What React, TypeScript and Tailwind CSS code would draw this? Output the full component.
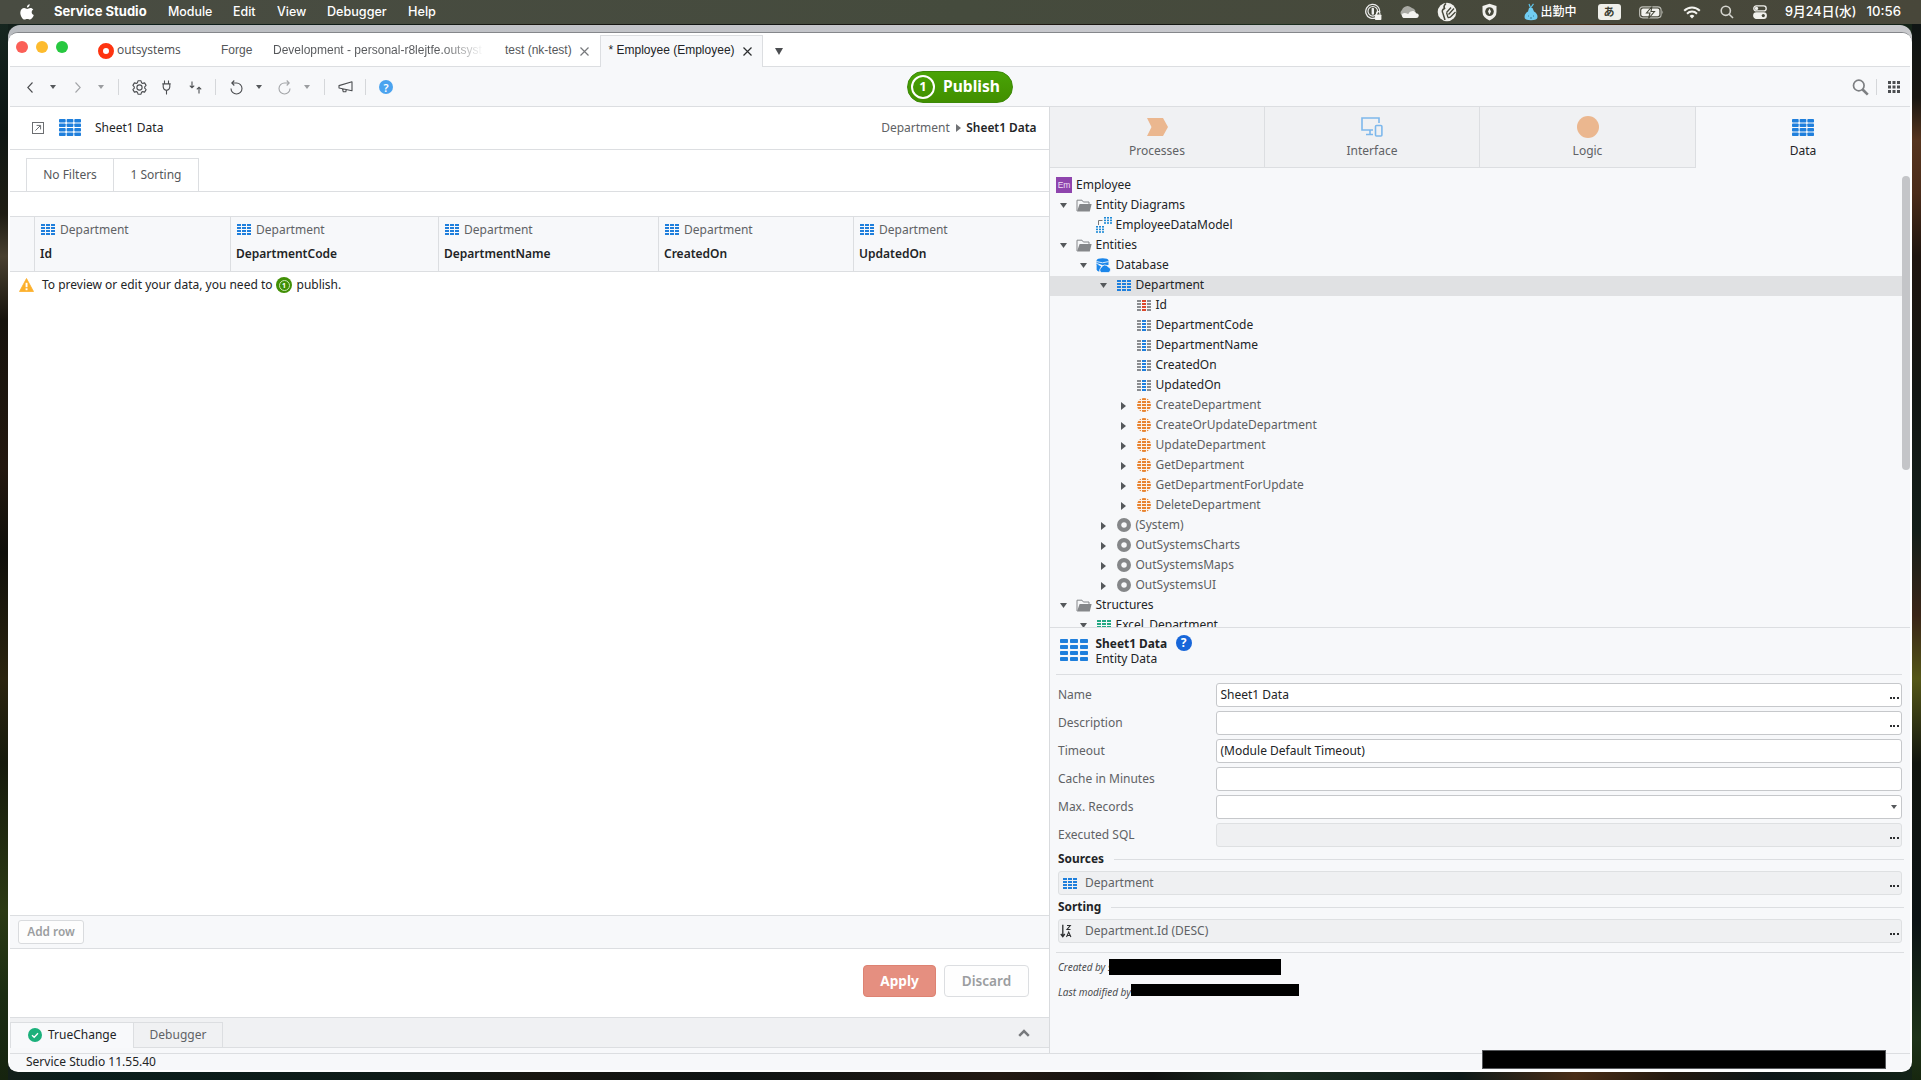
import React from "react";

type P = { className?: string };

/* ---------- icons ---------- */

function TableIcon({ w = 14, h = 11, color = "#1f7fdc", mid, gap = 1 }: { w?: number; h?: number; color?: string; mid?: string; gap?: number }) {
  const cw = (w - 2 * gap) / 3;
  const ch = (h - 3 * gap) / 4;
  return (
    <svg width={w} height={h} viewBox={`0 0 ${w} ${h}`} className="block shrink-0">
      {[0, 1, 2, 3].map((r) =>
        [0, 1, 2].map((c) => (
          <rect key={`${r}${c}`} x={c * (cw + gap)} y={r * (ch + gap)} width={cw} height={ch} fill={c === 1 && mid ? mid : color} rx={w > 20 ? 0.8 : 0} />
        ))
      )}
    </svg>
  );
}

function Tri({ dir = "down", w = 7, h = 5, color = "#55585b" }: { dir?: "down" | "right"; w?: number; h?: number; color?: string }) {
  return (
    <svg width={w} height={h} viewBox={`0 0 ${w} ${h}`} className="block shrink-0">
      <path d={dir === "down" ? `M0 0H${w}L${w / 2} ${h}Z` : `M0 0V${h}L${w} ${h / 2}Z`} fill={color} />
    </svg>
  );
}

function FolderIcon() {
  return (
    <svg width="16" height="13" viewBox="0 0 16 13" className="block">
      <path d="M1 12V1.2H6L7.4 3H13V5" fill="none" stroke="#85878a" strokeWidth="1" />
      <path d="M3.6 5H15.6L13.8 12.5H1Z" fill="#85878a" />
    </svg>
  );
}

function DiagramIcon() {
  return (
    <svg width="16" height="16" viewBox="0 0 16 16" className="block">
      <path d="M2.5 8V3.5H6.5" fill="none" stroke="#777" />
      {[0, 1, 2].map((c) =>
        [0, 1, 2].map((r) => (
          <g key={`${c}${r}`} fill="#1f8ad6">
            <rect x={8 + c * 3} y={r * 2.6} width="2" height="1.6" />
            <rect x={c * 3} y={9 + r * 2.6} width="2" height="1.6" />
          </g>
        ))
      )}
    </svg>
  );
}

function DatabaseIcon() {
  return (
    <svg width="15" height="15" viewBox="0 0 15 15" className="block">
      <path d="M.6 2.4C.6 1 3.2 .3 6.6 .3S12.5 1 12.5 2.4V7H.6Z" fill="#1b86ea" />
      <path d="M.6 3.6Q6.500 6 12.500 3.600" stroke="#f7f8fa" strokeWidth=".9" fill="none" />
      <path d="M.6 5.500L6.500 7.600" stroke="#f7f8fa" strokeWidth="1" fill="none" />
      <path d="M.6 6.300L5 8.200 3.200 13.800Q.6 13 .6 11.500Z" fill="#1b86ea" />
      <path d="M5.600 14.600A2.700 2.700 0 0 1 5.300 9.600 3.800 3.800 0 0 1 12.200 8.900 2.900 2.900 0 0 1 12.200 14.600Z" fill="#1b86ea" stroke="#f7f8fa" strokeWidth=".8" />
    </svg>
  );
}

function ActionIcon() {
  return (
    <svg width="14" height="14" viewBox="0 0 14 14" className="block">
      <circle cx="7" cy="7" r="7" fill="#e8832f" />
      <path d="M0 2.500H14M0 5.500H14M0 8.500H14M0 11.500H14M4.500 0V14M9.500 0V14" stroke="#fbf3ec" strokeWidth="1" />
    </svg>
  );
}

function RingIcon() {
  return (
    <svg width="14" height="14" viewBox="0 0 14 14" className="block">
      <circle cx="7" cy="7" r="4.900" fill="none" stroke="#858789" strokeWidth="4.200" />
    </svg>
  );
}

/* ---------- menu bar ---------- */

function MenuBar() {
  return (
    <div className="flex h-6 shrink-0 items-center bg-linear-to-r from-[#494c42] via-[#454b3d] to-[#48473a] font-['Inter','Noto_Sans_CJK_JP',sans-serif] text-[12.4px] font-medium whitespace-nowrap text-white">
      <svg width="14" height="16" viewBox="0 0 14 16" className="ml-[20px] block" fill="#fff">
        <path d="M9.8 .2C9.9 1.7 8.5 3.5 6.9 3.4 6.7 1.9 8.3 .4 9.8 .2ZM13.3 5.5C11 6.9 11.3 10 13.8 11.1 13 13.3 11.6 15.6 10.1 15.6 9 15.6 8.6 15 7.3 15S5.5 15.6 4.5 15.6C2.5 15.6 .3 11.8 .3 8.8 .3 5.7 2.3 4.1 4.2 4.1 5.5 4.1 6.5 4.9 7.2 4.9S9 4 10.5 4C11.5 4 12.7 4.6 13.3 5.5Z" />
      </svg>
      <span className="ml-[20px] w-[114px] text-[13px] font-bold">Service Studio</span>
      <span className="w-[65px]">Module</span>
      <span className="w-[44px]">Edit</span>
      <span className="w-[50px]">View</span>
      <span className="w-[81px] text-[12.600px]">Debugger</span>
      <span className="text-[12.700px]">Help</span>

      <div className="ml-auto flex w-[556.500px] items-center">
        <svg width="17" height="18" viewBox="0 0 17 18" className="block">
          <path d="M11 14.600A7 7 0 1 1 14.700 9" fill="none" stroke="#eee" strokeWidth="1.300" />
          <circle cx="7.800" cy="8.300" r="4.800" fill="none" stroke="#eee" strokeWidth="1.200" />
          <rect x="6.600" y="4.800" width="2.400" height="7" rx="1" fill="#eee" />
          <rect x="10" y="11.500" width="6.400" height="5.500" rx=".8" fill="#f4f4f0" />
          <path d="M11.500 11.500V10.300A1.700 1.700 0 0 1 14.900 10.300V11.500" fill="none" stroke="#f4f4f0" strokeWidth="1.100" />
        </svg>
        <svg width="20" height="14" viewBox="0 0 20 14" className="ml-[17px] block">
          <path d="M3.500 11A3.500 3.500 0 0 1 3 5 6 6 0 0 1 13 3 5 5 0 0 1 16.500 6Z" fill="#a9aaa4" />
          <path d="M4.500 13A3 3 0 0 1 3.500 8.500Q6 7.500 9 9 11 5.500 14.500 6 17 6.500 17 8.300 19.800 8.500 19.800 10.800 19.500 13 17.300 13Z" fill="#f3f3f0" />
        </svg>
        <svg width="20" height="20" viewBox="0 0 20 20" className="ml-[18px] block">
          <circle cx="10" cy="10" r="9.300" fill="#f1f1ed" />
          <path d="M9 1.500Q6 4 7.500 6.500 4 8 6 11.500L8 18" stroke="#46483b" strokeWidth="1.500" fill="none" />
          <path d="M9.500 10.500L14 5.500M11.500 12.500L17 6.500M11 15.500Q13 16 15 13.500L18.500 10M9.500 10.500L11 15.500" stroke="#46483b" strokeWidth="1.300" fill="none" />
        </svg>
        <svg width="15" height="18" viewBox="0 0 15 18" className="ml-[25px] block">
          <path d="M7.500 .8L14.500 3V9Q14.500 14.500 7.500 17.400 .5 14.500 .5 9V3Z" fill="#f1f1ed" />
          <circle cx="7.500" cy="8.600" r="4.300" fill="#46483b" />
          <path d="M7.500 5.600L9 8.600 7.500 11.600 6 8.600Z" fill="#f1f1ed" />
        </svg>
        <svg width="14" height="18" viewBox="0 0 14 18" className="ml-[27px] block">
          <path d="M5 1L6.500 5 9.500 .8" stroke="#5ec3ea" strokeWidth="1.200" fill="none" />
          <path d="M5 5H8.500L10 8.500Q13.600 10.500 13.500 14 13.500 17.300 7 17.300 .5 17.300 .5 14 .5 10.500 4 8.500Z" fill="#71cdf2" />
          <path d="M4.500 12.500V13.500M9.500 12.500V13.500M6 15H8" stroke="#3a7e9b" strokeWidth="1" />
        </svg>
        <span className="ml-[3px] text-[12px]">出勤中</span>
        <span className="ml-[21px] flex h-4 w-[23px] items-center justify-center rounded-[3px] bg-[#efefea] text-[11px] font-bold text-[#3d3f33]">あ</span>
        <svg width="25" height="13" viewBox="0 0 25 13" className="ml-[18px] block">
          <rect x=".6" y=".9" width="21.500" height="11" rx="3.300" fill="none" stroke="#bdbdb6" strokeWidth="1.100" />
          <rect x="2.300" y="2.600" width="18" height="7.600" rx="1.800" fill="#f2f2ee" />
          <path d="M13 .5L7.500 7H11L9.500 12.500 15.500 5.500H12Z" fill="#f2f2ee" stroke="#46483b" strokeWidth="1.100" />
          <path d="M23.400 4.600Q24.800 6.400 23.400 8.200" fill="#bdbdb6" />
        </svg>
        <svg width="18" height="13" viewBox="0 0 18 13" className="ml-[19px] block" fill="none" stroke="#f4f4f0" strokeWidth="2">
          <path d="M1.200 4.700A11 11 0 0 1 16.800 4.700M4 7.700A7 7 0 0 1 14 7.700" />
          <path d="M9 12.500L6.600 9.900A3.500 3.500 0 0 1 11.400 9.900Z" fill="#f4f4f0" stroke="none" />
        </svg>
        <svg width="14" height="14" viewBox="0 0 14 14" className="ml-[19px] block" fill="none" stroke="#d4d4ce" strokeWidth="1.600">
          <circle cx="5.800" cy="5.800" r="4.600" />
          <path d="M9.200 9.200L13 13" />
        </svg>
        <svg width="14" height="14" viewBox="0 0 14 14" className="ml-[19px] block" fill="none" stroke="#f1f1ed" strokeWidth="1.300">
          <rect x=".8" y=".9" width="12.400" height="5" rx="2.500" />
          <rect x=".8" y="8" width="12.400" height="5.300" rx="2.600" fill="#f1f1ed" />
          <circle cx="3.500" cy="3.400" r="1.700" fill="#f1f1ed" stroke="none" />
          <circle cx="10.300" cy="10.600" r="1.600" fill="#46483b" stroke="none" />
        </svg>
        <span className="ml-[18.500px] w-[81.500px] text-[12.700px]">9月24日(水)</span>
        <span className="text-[13.200px]">10:56</span>
      </div>
    </div>
  );
}

/* ---------- window tabs and toolbar ---------- */

function Cross({ color }: { color: string }) {
  return (
    <svg width="9" height="9" viewBox="0 0 9 9" className="block shrink-0" stroke={color} strokeWidth="1.200">
      <path d="M.5 .5L8.500 8.500M8.500 .5L.5 8.500" />
    </svg>
  );
}

function TabBar() {
  return (
    <div className="flex h-[34px] shrink-0 border-b border-[#dcdee1] bg-white font-['Liberation_Sans',sans-serif] text-[12px] whitespace-nowrap text-[#55575a]">
      <div className="mt-2 ml-[6px] flex h-3 gap-[8px]">
        <i className="size-3 rounded-full bg-[#fb5f57]" />
        <i className="size-3 rounded-full bg-[#fdbb2e]" />
        <i className="size-3 rounded-full bg-[#27c840]" />
      </div>
      <div className="ml-[30px] flex h-[34px] items-center">
        <svg width="16" height="16" viewBox="0 0 16 16" className="mt-[2px] block">
          <circle cx="8" cy="8" r="5.500" fill="none" stroke="#fe3410" strokeWidth="5" />
        </svg>
        <span className="ml-[3px] w-[104px] font-['Open_Sans',sans-serif] text-[12px] font-medium tracking-[-0.050px] text-[#4c4d50]">outsystems</span>
        <span className="w-[52px]">Forge</span>
        <span className="w-[232px]">
          <span className="block w-[211px] overflow-hidden bg-linear-to-r from-[#55575a] from-80% to-transparent bg-clip-text text-transparent">Development - personal-r8lejtfe.outsyst</span>
        </span>
        <span className="w-[75px]">test (nk-test)</span>
        <div className="mt-[2px]"><Cross color="#77797c" /></div>
      </div>
      <div className="mt-[2px] ml-[11px] flex h-[32px] w-[163px] shrink-0 items-center border border-b-0 border-[#dcdee1] bg-[#f7f8fa] pb-[3px] pl-[7.500px] text-[#222426]">
        <span className="w-[134px]">* Employee (Employee)</span>
        <div className="mt-[3px]"><Cross color="#2c2e30" /></div>
      </div>
      <div className="mt-[15px] ml-[12px]"><Tri w={8} h={7} color="#4c4e51" /></div>
    </div>
  );
}

function Sep({ className = "" }: P) {
  return <i className={`block h-4 w-px shrink-0 bg-[#d5d7da] ${className}`} />;
}

function Toolbar() {
  const st = { fill: "none", stroke: "#4c4e51", strokeWidth: 1.1 };
  return (
    <div className="flex h-10 shrink-0 items-center border-b border-[#dcdee1] bg-[#f7f8fa]">
      <div className="flex w-[897px] items-center pt-px">
        <svg width="6" height="11" viewBox="0 0 6 11" className="ml-[17px] block" {...st}><path d="M5.500 .5L.8 5.500 5.500 10.500" /></svg>
        <div className="ml-[17px]"><Tri w={6} h={4} /></div>
        <svg width="6" height="11" viewBox="0 0 6 11" className="ml-[19px] block" {...st} stroke="#a3a5a8"><path d="M.5 .5L5.200 5.500 .5 10.500" /></svg>
        <div className="ml-[17px]"><Tri w={6} h={4} color="#9b9da0" /></div>
        <Sep className="ml-[14px]" />
        <svg width="15" height="15" viewBox="0 0 15 15" className="ml-[12.500px] block" {...st}>
          <circle cx="7.500" cy="7.500" r="2.600" />
          <path d="M6 .8H9L9.500 2.700 10.700 3.400 12.600 2.900 14.100 5.400 12.700 6.800V8.200L14.100 9.600 12.600 12.100 10.700 11.600 9.500 12.300 9 14.200H6L5.500 12.300 4.300 11.600 2.400 12.100 .9 9.600 2.300 8.200V6.800L.9 5.400 2.400 2.900 4.300 3.400 5.500 2.700Z" strokeLinejoin="round" />
        </svg>
        <svg width="9" height="15" viewBox="0 0 9 15" className="ml-[15.500px] block" {...st}>
          <path d="M2.500 .5V3.500M6.500 .5V3.500M.3 3.900H8.700M1.200 4V7Q1.500 10 4.500 10.400 7.500 10 7.800 7V4M4.500 10.500V14.500" />
        </svg>
        <svg width="13" height="13" viewBox="0 0 13 13" className="ml-[17.500px] block" {...st}>
          <path d="M3 .5V6.500M.8 4.600L3 6.800 5.200 4.600M10 12.500V6.500M7.800 8.400L10 6.200 12.200 8.400" />
        </svg>
        <Sep className="ml-[13.500px]" />
        <svg width="13" height="15" viewBox="0 0 13 15" className="ml-[14px] block" {...st}>
          <path d="M1.800 3H6.500A5.500 5.500 0 1 1 1 8.500M4.300 .5L1.800 3 4.300 5.500" />
        </svg>
        <div className="ml-[13px]"><Tri w={6} h={4} /></div>
        <svg width="13" height="15" viewBox="0 0 13 15" className="ml-[16px] block" {...st} stroke="#a3a5a8">
          <path d="M11.200 3H6.500A5.500 5.500 0 1 0 12 8.500M8.700 .5L11.200 3 8.700 5.500" />
        </svg>
        <div className="ml-[13px]"><Tri w={6} h={4} color="#9b9da0" /></div>
        <Sep className="ml-[14px]" />
        <svg width="15" height="12" viewBox="0 0 15 12" className="ml-[12.500px] block" {...st}>
          <path d="M14 .8V9.800L1 7V4.600ZM4.500 8L5.300 10.800H7.800L8.200 8.900" strokeLinejoin="round" />
        </svg>
        <Sep className="ml-[12.500px]" />
        <span className="ml-[13px] flex size-[14px] items-center justify-center rounded-full bg-[#4ba3ef] font-['Noto_Sans',sans-serif] text-[11px] leading-none font-semibold text-white">?</span>
      </div>
      <div className="flex h-8 w-[106px] items-center rounded-full border border-[#3c8a08] bg-linear-to-b from-[#49a306] to-[#418f00] font-['Noto_Sans',sans-serif] text-white">
        <span className="ml-[3px] flex size-6 items-center justify-center rounded-full border-2 border-white text-[13px] font-bold">1</span>
        <span className="ml-[8px] text-[15.600px] font-bold">Publish</span>
      </div>
      <div className="ml-auto flex items-center pt-px pr-[10px]">
        <svg width="17" height="17" viewBox="0 0 17 17" className="block" fill="none" stroke="#7d7f82">
          <circle cx="6.800" cy="6.500" r="5.300" strokeWidth="1.700" />
          <path d="M10.600 10.500L15.800 15.600" strokeWidth="2.600" />
        </svg>
        <Sep className="ml-[7px]" />
        <svg width="12" height="12" viewBox="0 0 12 12" className="ml-[11px] block" fill="#4c4e51">
          {[0, 4.500, 9].map((y) => [0, 4.500, 9].map((x) => <rect key={`${x}-${y}`} x={x} y={y} width="3" height="3" />))}
        </svg>
      </div>
    </div>
  );
}

/* ---------- left pane ---------- */

const columns: [string, string][] = [
  ["Id", "w-[196px] border-r"],
  ["DepartmentCode", "w-[208px] border-r"],
  ["DepartmentName", "w-[220px] border-r"],
  ["CreatedOn", "w-[195px] border-r"],
  ["UpdatedOn", "flex-1"],
];

function LeftPane() {
  return (
    <div className="flex w-[1039px] shrink-0 flex-col bg-white text-[#222426]">
      <div className="flex h-[43px] shrink-0 items-center border-b border-[#dcdee1] pr-[12.500px]">
        <svg width="12" height="12" viewBox="0 0 12 12" className="ml-[22px] block" fill="none" stroke="#6c6e71">
          <rect x=".5" y=".5" width="11" height="11" />
          <path d="M3.500 8.500L8.300 3.700M4.600 3.400H8.600V7.400" />
        </svg>
        <div className="-mt-px ml-[15px]"><TableIcon w={22} h={17} /></div>
        <span className="ml-[14px]">Sheet1 Data</span>
        <span className="ml-auto pb-px text-[#606265]">Department</span>
        <div className="mr-[5.500px] ml-[6px]"><Tri dir="right" w={5} h={8} color="#707275" /></div>
        <span className="pb-px text-[11.900px] font-semibold">Sheet1 Data</span>
      </div>

      <div className="flex h-[42px] shrink-0 border-b border-[#dcdee1] pt-[8px] pl-[16px] text-[#56585b]">
        <div className="flex w-[88px] items-center justify-center border border-b-0 border-[#dcdee1]">No Filters</div>
        <div className="flex w-[85px] items-center justify-center border-t border-r border-[#dcdee1]">1 Sorting</div>
      </div>
      <div className="h-[24px] shrink-0" />

      <div className="flex h-[56px] shrink-0 border-y border-[#dcdee1] bg-[#f7f8fa]">
        <div className="w-[25px] border-r border-[#dcdee1]" />
        {columns.map(([name, cls]) => (
          <div key={name} className={`border-[#dcdee1] pt-[3px] ${cls}`}>
            <div className="flex h-[19px] items-center pl-[6px] text-[#606265]">
              <TableIcon />
              <span className="ml-[5px]">Department</span>
            </div>
            <div className="mt-[5px] flex h-[19px] items-center pl-[5px] font-semibold">{name}</div>
          </div>
        ))}
      </div>

      <div className="flex h-[26px] shrink-0 items-center">
        <svg width="15" height="14" viewBox="0 0 15 14" className="ml-[8.500px] block">
          <path d="M7.500 .5L14.500 13.500H.5Z" fill="#fcb02c" strokeLinejoin="round" stroke="#fcb02c" strokeWidth=".8" />
          <rect x="6.600" y="4.800" width="1.900" height="4.400" fill="#fff" />
          <rect x="6.600" y="10.300" width="1.900" height="1.900" fill="#fff" />
        </svg>
        <span className="ml-[8.500px]">To preview or edit your data, you need to</span>
        <span className="ml-[3.500px] flex size-4 items-center justify-center rounded-full bg-[#419006]">
          <span className="flex size-[11px] items-center justify-center rounded-full border border-[#c9e6b4] text-[7px] leading-none font-bold text-white">1</span>
        </span>
        <span className="ml-[4.500px]">publish.</span>
      </div>

      <div className="mt-auto flex h-[34px] shrink-0 items-center border-y border-[#dcdee1] bg-[#f7f8fa] pl-[8px]">
        <span className="flex h-6 w-[66px] items-center justify-center rounded-[3px] border border-[#d9dbde] bg-[#fdfdfd] text-[11.800px] font-semibold text-[#9b9da0]">Add row</span>
      </div>
      <div className="flex h-[68px] shrink-0 items-start justify-end gap-[8px] pt-[16px] pr-[20px] text-[13.600px] font-bold">
        <span className="flex h-8 w-[73px] items-center justify-center rounded-[4px] border border-[#dd8272] bg-[#e58f80] text-white">Apply</span>
        <span className="flex h-8 w-[85px] items-center justify-center rounded-[4px] border border-[#dcdee1] bg-[#fefefe] font-semibold text-[#9b9da0]">Discard</span>
      </div>

      <div className="flex h-[31px] shrink-0 border-y border-[#dcdee1] bg-[#f0f1f3] pt-[4px]">
        <div className="-mb-px flex w-[124px] items-center border border-b-0 border-[#dcdee1] bg-[#f8f9fb] pb-[2px] pl-[17px]">
          <svg width="14" height="14" viewBox="0 0 14 14" className="block">
            <circle cx="7" cy="7" r="7" fill="#1bb07b" />
            <path d="M4 7.200L6.200 9.300 10 5.300" stroke="#fff" strokeWidth="1.300" fill="none" />
          </svg>
          <span className="ml-[6px]">TrueChange</span>
        </div>
        <div className="flex w-[89px] items-center justify-center border-t border-r border-[#dcdee1] pb-px text-[#606265]">Debugger</div>
        <svg width="12" height="8" viewBox="0 0 12 8" className="mt-[7px] mr-[19px] ml-auto block">
          <path d="M1.200 6.800L6 2 10.800 6.800" stroke="#77797c" strokeWidth="2.500" fill="none" />
        </svg>
      </div>
      <div className="h-[5px] shrink-0 bg-[#f7f8fa]" />
    </div>
  );
}

/* ---------- right pane ---------- */

function LayerTab({ label, icon, cls }: { label: string; icon: React.ReactNode; cls: string }) {
  return (
    <div className={`flex flex-col items-center border-[#dcdee1] pt-[9px] ${cls}`}>
      <div className="flex h-[22px] items-center">{icon}</div>
      <div className="mt-[4px] leading-[18px]">{label}</div>
    </div>
  );
}

type Row = { l: number; t: string; i: "folder" | "diagram" | "db" | "table" | "id" | "attr" | "action" | "ring" | "struct"; a?: "down" | "right"; dim?: boolean; sel?: boolean };

const rows: Row[] = [
  { l: 1, t: "Entity Diagrams", i: "folder", a: "down" },
  { l: 2, t: "EmployeeDataModel", i: "diagram" },
  { l: 1, t: "Entities", i: "folder", a: "down" },
  { l: 2, t: "Database", i: "db", a: "down" },
  { l: 3, t: "Department", i: "table", a: "down", sel: true },
  { l: 4, t: "Id", i: "id" },
  { l: 4, t: "DepartmentCode", i: "attr" },
  { l: 4, t: "DepartmentName", i: "attr" },
  { l: 4, t: "CreatedOn", i: "attr" },
  { l: 4, t: "UpdatedOn", i: "attr" },
  { l: 4, t: "CreateDepartment", i: "action", a: "right", dim: true },
  { l: 4, t: "CreateOrUpdateDepartment", i: "action", a: "right", dim: true },
  { l: 4, t: "UpdateDepartment", i: "action", a: "right", dim: true },
  { l: 4, t: "GetDepartment", i: "action", a: "right", dim: true },
  { l: 4, t: "GetDepartmentForUpdate", i: "action", a: "right", dim: true },
  { l: 4, t: "DeleteDepartment", i: "action", a: "right", dim: true },
  { l: 3, t: "(System)", i: "ring", a: "right", dim: true },
  { l: 3, t: "OutSystemsCharts", i: "ring", a: "right", dim: true },
  { l: 3, t: "OutSystemsMaps", i: "ring", a: "right", dim: true },
  { l: 3, t: "OutSystemsUI", i: "ring", a: "right", dim: true },
  { l: 1, t: "Structures", i: "folder", a: "down" },
  { l: 2, t: "Excel_Department", i: "struct", a: "down" },
];

const indent = ["pl-[6px]", "pl-[4px]", "pl-[24px]", "pl-[44px]", "pl-[64px]"];

function rowIcon(i: Row["i"]) {
  switch (i) {
    case "folder": return <FolderIcon />;
    case "diagram": return <DiagramIcon />;
    case "db": return <DatabaseIcon />;
    case "table": return <TableIcon />;
    case "id": return <TableIcon color="#8a8c8f" mid="#dc4a2c" />;
    case "attr": return <TableIcon color="#8a8c8f" mid="#1f7fdc" />;
    case "action": return <ActionIcon />;
    case "ring": return <RingIcon />;
    case "struct": return <TableIcon color="#23a883" />;
  }
}

function Tree() {
  return (
    <div className="relative h-[459px] shrink-0 overflow-hidden pt-[8px]">
      <div className="flex h-5 items-center pb-[2px] pl-[6px]">
        <span className="flex size-4 items-center justify-center bg-[#8e44ad] font-['Liberation_Sans',sans-serif] text-[8.500px] text-[#f0dff6]">Em</span>
        <span className="ml-1">Employee</span>
      </div>
      {rows.map((r, k) => (
        <div key={k} className={`flex h-5 items-center ${indent[r.l]} ${r.sel ? "bg-[#e0e1e3]" : ""} ${r.dim ? "text-[#5d5f62]" : ""}`}>
          <span className="flex w-[19px] justify-center pb-px">{r.a && (r.a === "down" ? <Tri w={7} h={5} /> : <Tri dir="right" w={5} h={8} />)}</span>
          <span className={`flex w-[21px] shrink-0 pb-[2px] ${r.i === "folder" || r.i === "diagram" || r.i === "db" ? "pl-[3px]" : "pl-[4px]"}`}>{rowIcon(r.i)}</span>
          <span className="ml-[1.500px] pb-[2px]">{r.t}</span>
        </div>
      ))}
      <div className="absolute top-[8px] right-0 h-[294px] w-[8px] rounded-full bg-[#c4c5c8]" />
    </div>
  );
}

function Dots() {
  return <span className="mt-[5px] mr-[2.500px] ml-auto flex gap-[1.500px]"><i className="size-[2px] bg-[#2c2e30]" /><i className="size-[2px] bg-[#2c2e30]" /><i className="size-[2px] bg-[#2c2e30]" /></span>;
}

function Field({ label, value = "", end, off }: { label: string; value?: string; end?: "dots" | "tri"; off?: boolean }) {
  return (
    <div className="flex h-6 items-center">
      <span className="w-[158px] text-[#606265]">{label}</span>
      <div className={`flex h-6 flex-1 items-center rounded-[3px] border pl-[3.500px] ${off ? "border-[#dee0e2] bg-[#eff0f2]" : "border-[#c6c8cb] bg-white"}`}>
        <span className="pb-px">{value}</span>
        {end === "dots" && <Dots />}
        {end === "tri" && <div className="mr-[4px] ml-auto"><Tri w={6} h={4} /></div>}
      </div>
    </div>
  );
}

function Group({ title, icon, value }: { title: string; icon: React.ReactNode; value: string }) {
  return (
    <>
      <div className="flex h-[24px] items-center">
        <span className="text-[11.900px] font-bold">{title}</span>
        <i className="-mr-[2px] ml-[10px] h-px flex-1 bg-[#dcdee1]" />
      </div>
      <div className="flex h-6 items-center rounded-[3px] border border-[#dee0e2] bg-[#eff0f2] text-[#606265]">
        <span className="flex w-[26px] pl-[1px]">{icon}</span>
        <span className="pb-px">{value}</span>
        <Dots />
      </div>
    </>
  );
}

function Properties() {
  return (
    <div className="flex flex-1 flex-col border-t border-[#dcdee1] pl-[6px]">
      <div className="mr-[8px] flex h-[47px] shrink-0 border-b border-[#dcdee1]">
        <div className="mt-[11px] ml-[4px]"><TableIcon w={28} h={22} gap={2} /></div>
        <div className="mt-[6.500px] ml-[7.500px] leading-[16px]">
          <div className="flex h-4 items-center">
            <span className="text-[11.900px] font-bold">Sheet1 Data</span>
            <span className="ml-[8.500px] flex size-4 items-center justify-center rounded-full bg-[#1766d9] text-[12px] leading-none font-bold text-white">?</span>
          </div>
          <div>Entity Data</div>
        </div>
      </div>
      <div className="mt-[8px] mr-[8px] ml-[2px] flex flex-col gap-[4px]">
        <Field label="Name" value="Sheet1 Data" end="dots" />
        <Field label="Description" end="dots" />
        <Field label="Timeout" value="(Module Default Timeout)" />
        <Field label="Cache in Minutes" />
        <Field label="Max. Records" end="tri" />
        <Field label="Executed SQL" end="dots" off />
      </div>
      <div className="mr-[8px] ml-[2px]">
        <Group title="Sources" icon={<div className="pl-[3px]"><TableIcon /></div>} value="Department" />
        <Group
          title="Sorting"
          icon={
            <svg width="12" height="14" viewBox="0 0 12 14" className="block" fill="none" stroke="#2c2e30">
              <path d="M2.800 .8V12M.8 10L2.800 12.600 4.800 10" strokeWidth="1.300" />
              <path d="M7 1.500H10.300L7 5.500H10.500M6.500 13L8.700 8 10.900 13M7.300 11.500H10.200" strokeWidth="1.100" />
            </svg>
          }
          value="Department.Id (DESC)"
        />
      </div>
      <div className="mt-[9px] mr-[6px] h-px bg-[#dcdee1]" />
      <div className="ml-[2px] text-[10px] text-[#4c4e51] italic">
        <div className="mt-[6px] flex h-[17px] items-center">
          <span className="w-[51px] whitespace-nowrap">Created by s</span>
          <i className="relative mb-px h-4 w-[172px] shrink-0 bg-black" />
        </div>
        <div className="mt-[8px] flex h-[17px] items-center">
          <span className="w-[73px] whitespace-nowrap">Last modified by</span>
          <i className="mb-[5px] h-3 w-[168px] bg-black" />
        </div>
      </div>
    </div>
  );
}

function RightPane() {
  return (
    <div className="flex flex-1 flex-col border-l border-[#d9dbde] bg-[#f7f8fa] text-[#222426]">
      <div className="flex h-[61px] shrink-0 text-[#606265]">
        <LayerTab label="Processes" cls="w-[215px] bg-[#f0f1f3] border-r border-b" icon={<svg width="21" height="18" viewBox="0 0 21 18"><path d="M0 0H16L21 9 16 18H0L4.500 9Z" fill="#ebb78f" /></svg>} />
        <LayerTab label="Interface" cls="w-[215px] bg-[#f0f1f3] border-r border-b" icon={
          <svg width="22" height="20" viewBox="0 0 22 20" fill="none" stroke="#7db8ec" strokeWidth="1.600">
            <path d="M18 6V1H1V13H12M9 13V17M5 17.500H12" /><rect x="14.500" y="8.500" width="6.400" height="10.500" rx="1" />
          </svg>} />
        <LayerTab label="Logic" cls="w-[216px] bg-[#f0f1f3] border-r border-b" icon={<i className="block size-[22px] rounded-full bg-[#ebb78f]" />} />
        <LayerTab label="Data" cls="flex-1 text-[#222426]" icon={<TableIcon w={22} h={17} />} />
      </div>
      <Tree />
      <Properties />
    </div>
  );
}

export default function App() {
  return (
    <div className="flex h-screen w-[1921px] flex-col overflow-hidden bg-[#12170f] bg-[linear-gradient(90deg,#14201a_0%,#0c1f1c_4%,#101c17_20%,#1a1710_28%,#0f1413_38%,#241a12_52%,#121210_60%,#1d3020_66%,#0f1a18_76%,#4a2d17_82%,#23190f_87%,#0d1618_92%,#142417_100%)] font-['Noto_Sans','Noto_Sans_CJK_JP',sans-serif] text-[12px]">
      <MenuBar />
      <div className="flex flex-1">
        <div className="w-[8px] shrink-0 bg-[linear-gradient(180deg,#16261f_0%,#0e1614_10%,#1f1d13_18%,#4a4130_22%,#16130d_28%,#23180f_42%,#0f0f0a_50%,#2b240f_62%,#161a0c_70%,#2c3a14_84%,#1b2c12_92%,#16240f_100%)]" />
        <div className="flex w-[1904px] shrink-0 flex-col pt-px">
          <div className="h-[28px] shrink-0 rounded-t-[12px] bg-linear-to-r from-[#b9bcc0] via-[#c6c7cc] to-[#c9cacd]" />
          <div className="relative -mt-[21px] flex h-[1040px] shrink-0 flex-col overflow-hidden rounded-[10px] border-t border-[#85878b] bg-white px-[2px] pb-[2px]">
            <TabBar />
            <Toolbar />
            <div className="flex min-h-0 flex-1">
              <LeftPane />
              <RightPane />
            </div>
            <div className="flex h-[17px] shrink-0 items-center border-t border-[#dcdee1] bg-[#f7f8fa] pl-[16px] text-[#222426]">
              Service Studio 11.55.40
            </div>
            <div className="absolute right-[26px] bottom-[3px] h-[19px] w-[404px] border border-[#55575a] bg-black" />
          </div>
        </div>
        <div className="flex-1 bg-[linear-gradient(180deg,#0f1514_0%,#1a1712_7%,#57361f_11%,#4b2c1a_16%,#1f150f_22%,#121613_35%,#15201a_48%,#3b2618_56%,#555718_62%,#12160f_70%,#0d1415_85%,#1f3319_96%,#17270f_100%)]" />
      </div>
    </div>
  );
}
